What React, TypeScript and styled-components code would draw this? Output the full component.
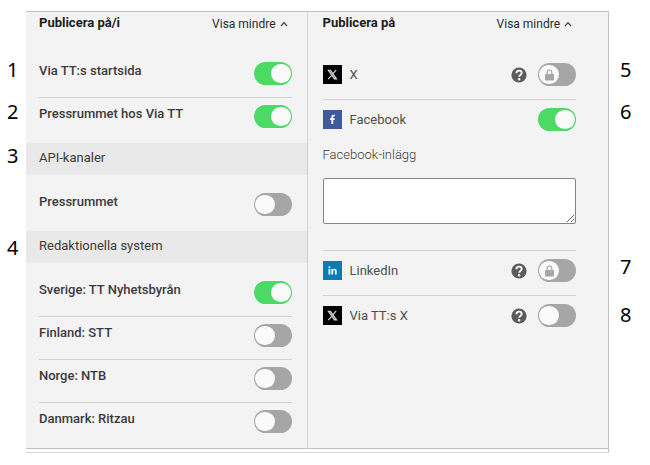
import React, { useState } from "react";
import styled, { createGlobalStyle, css } from "styled-components";

const GlobalStyle = createGlobalStyle`
  * { box-sizing: border-box; }
  body {
    margin: 0;
    background: #fff;
    color: #3b3b3b;
    font: 400 13px/16px Roboto, "Liberation Sans", sans-serif;
  }
`;

const Page = styled.main`
  display: grid;
  grid-template-columns: 26px minmax(0, 1fr) 41px;
  padding: 11px 0 12px;
`;

const Markers = styled.ol<{ $rows: string; $indent: number }>`
  display: grid;
  grid-template-rows: ${(p) => p.$rows};
  align-content: start;
  margin: 0;
  padding: 47px 0 0 ${(p) => p.$indent}px;
  list-style: none;
  font: 400 20px/24px "Noto Sans", "Open Sans", sans-serif;
  color: #000;
`;

const Panel = styled.div`
  display: grid;
  grid-template-columns: 282fr 301fr;
  padding-bottom: 3px;
  border: solid #c2c2c2;
  border-width: 1px 1px 1px 0;
  border-bottom-color: #d6d6d6;
`;

const Column = styled.section<{ $divided?: boolean }>`
  --start: ${(p) => (p.$divided ? 13 : 15)}px;
  --end: ${(p) => (p.$divided ? 15 : 32)}px;
  background: #f3f3f3;
  border-bottom: 1px solid #c2c2c2;
  ${(p) => p.$divided && css`border-right: 1px solid #d0d0d0;`}
`;

const Header = styled.header`
  display: flex;
  justify-content: space-between;
  align-items: center;
  height: 32px;
  padding: 0 calc(var(--end) + 4px) 10px var(--start);
`;

const Title = styled.h2`
  margin: 0;
  font-size: 13px;
  font-weight: 700;
  color: #1c1c1c;
`;

const Collapse = styled.button`
  display: flex;
  align-items: center;
  gap: 4px;
  padding: 2px 0 0;
  border: 0;
  background: none;
  color: #2a2a2a;
  font: 400 12px/16px Roboto, "Liberation Sans", sans-serif;
  cursor: pointer;
`;

const SectionTitle = styled.h3`
  margin: 0;
  padding: 7px var(--start) 9px;
  background: #e9e9e9;
  font-size: 13px;
  font-weight: 400;
`;

const Group = styled.div`
  padding: 11px var(--end) 3px var(--start);
`;

const Row = styled.div<{ $divided?: boolean }>`
  display: flex;
  align-items: flex-start;
  justify-content: space-between;
  padding: 7px 0 12px;
  ${(p) => p.$divided && css`border-top: 1px solid #d2d2d2;`}
`;

const RowLabel = styled.label`
  font-weight: 500;
  line-height: 18px;
`;

const ChannelRow = styled(Row)`
  align-items: center;
  gap: 11px;
  padding: 8px 0 13px;
`;

const ChannelLabel = styled.label`
  display: flex;
  flex: 1;
  align-items: center;
  gap: 8px;
  color: #4e4e4e;
`;

const HelpButton = styled.button`
  display: flex;
  padding: 0;
  border: 0;
  background: none;
  cursor: pointer;
`;

const SwitchBox = styled.span`
  position: relative;
  display: flex;
`;

const SwitchInput = styled.input`
  appearance: none;
  display: flex;
  align-items: center;
  width: 38px;
  height: 23px;
  margin: 0;
  padding: 0 1px;
  border-radius: 12px;
  background: #a6a6a6;
  cursor: pointer;

  &::before {
    content: "";
    width: 20px;
    height: 19px;
    border-radius: 10px;
    background: #fafafa;
  }
  &:checked {
    justify-content: flex-end;
    background: #4cd964;
  }
`;

const LockMark = styled.svg`
  position: absolute;
  left: 7px;
  top: 6px;
  pointer-events: none;
`;

const Field = styled.div`
  display: flex;
  flex-direction: column;
  gap: 15px;
  padding: 3px 0 26px;
`;

const FieldLabel = styled.label`
  font-weight: 300;
`;

const TextArea = styled.textarea`
  display: block;
  width: 100%;
  height: 46px;
  padding: 4px;
  border: 1px solid #858585;
  border-radius: 2px;
  background: #fff;
  font: inherit;
  resize: both;
`;

function Caret() {
  return (
    <svg width="8" height="6" viewBox="0 0 8 6" aria-hidden="true">
      <path d="M1 5 4 1.6 7 5" fill="none" stroke="#444" strokeWidth="1.2" />
    </svg>
  );
}

function XLogo() {
  return (
    <svg width="19" height="19" viewBox="0 0 19 19" aria-hidden="true">
      <rect width="19" height="19" fill="#000" />
      <path d="M5.3 5.3h2.2l6.1 8.6h-2.2z" fill="#777" stroke="#d8d8d8" strokeWidth="1.1" />
      <path d="M13.2 4.9 10.1 8.6M8.7 10.3l-3.5 3.9" stroke="#d8d8d8" strokeWidth="1.1" />
    </svg>
  );
}

function FacebookLogo() {
  return (
    <svg width="19" height="19" viewBox="0 0 19 19" aria-hidden="true">
      <rect width="19" height="19" fill="#3f5b9b" />
      <path d="M8.4 14V9.9H7V8.2h1.4V7c0-1.5.9-2.3 2.2-2.3l1.3.1v1.5h-.8c-.7 0-.9.3-.9.8v1.1h1.6l-.3 1.7h-1.3V14z" fill="#fff" />
    </svg>
  );
}

function LinkedInLogo() {
  return (
    <svg width="19" height="19" viewBox="0 0 19 19" aria-hidden="true">
      <rect width="19" height="19" fill="#0a7cb5" />
      <circle cx="6.4" cy="6.3" r="1" fill="#fff" />
      <path d="M5.5 8h1.8v5.4H5.5zM8.4 8h1.7v.7c.3-.5.9-.9 1.6-.9 1.5 0 2 .9 2 2.4v3.2H12v-2.9c0-.8-.2-1.2-.8-1.2-.7 0-1 .5-1 1.2v2.9H8.4z" fill="#fff" />
    </svg>
  );
}

function HelpIcon() {
  return (
    <svg width="16" height="16" viewBox="0 0 16 16" aria-hidden="true">
      <circle cx="8" cy="8" r="7.6" fill="#5b5b5b" />
      <path d="M5.4 6.3C5.4 4.5 6.5 3.6 8 3.6s2.7.9 2.7 2.3c0 1.9-2.5 2-2.5 3.9" fill="none" stroke="#fff" strokeWidth="1.8" />
      <circle cx="8.1" cy="12.2" r="1.2" fill="#fff" />
    </svg>
  );
}

function Switch({ id, on, locked }: { id: string; on?: boolean; locked?: boolean }) {
  const [checked, setChecked] = useState(Boolean(on));
  return (
    <SwitchBox>
      <SwitchInput
        id={id}
        type="checkbox"
        role="switch"
        checked={checked}
        disabled={locked}
        onChange={(e) => setChecked(e.target.checked)}
      />
      {locked && (
        <LockMark width="9" height="12" viewBox="0 0 9 12" aria-hidden="true">
          <path d="M2.2 5.5V3.3a2.3 2.3 0 0 1 4.6 0v2.2" fill="none" stroke="#a6a6a6" strokeWidth="1.2" />
          <rect y="5" width="9" height="6.4" rx=".6" fill="#a6a6a6" />
        </LockMark>
      )}
    </SwitchBox>
  );
}

function ColumnHeader({ title }: { title: string }) {
  return (
    <Header>
      <Title>{title}</Title>
      <Collapse type="button" aria-expanded="true">
        Visa mindre
        <Caret />
      </Collapse>
    </Header>
  );
}

interface Outlet {
  id: string;
  name: string;
  on?: boolean;
}

function Outlets({ items }: { items: Outlet[] }) {
  return (
    <Group>
      {items.map((item, i) => (
        <Row key={item.id} $divided={i > 0}>
          <RowLabel htmlFor={item.id}>{item.name}</RowLabel>
          <Switch id={item.id} on={item.on} />
        </Row>
      ))}
    </Group>
  );
}

interface ChannelProps extends Outlet {
  logo: React.ReactNode;
  help?: boolean;
  locked?: boolean;
  divided?: boolean;
}

function Channel({ id, name, logo, on, help, locked, divided }: ChannelProps) {
  return (
    <ChannelRow $divided={divided}>
      <ChannelLabel htmlFor={id}>
        {logo}
        {name}
      </ChannelLabel>
      {help && (
        <HelpButton type="button" aria-label={`Hjälp: ${name}`}>
          <HelpIcon />
        </HelpButton>
      )}
      <Switch id={id} on={on} locked={locked} />
    </ChannelRow>
  );
}

export default function App() {
  return (
    <>
      <GlobalStyle />
      <Page>
        <Markers $rows="42px 44px 92px 24px" $indent={7}>
          <li>1</li>
          <li>2</li>
          <li>3</li>
          <li>4</li>
        </Markers>
        <Panel>
          <Column $divided>
            <ColumnHeader title="Publicera på/i" />
            <Outlets
              items={[
                { id: "startsida", name: "Via TT:s startsida", on: true },
                { id: "pressrum-via", name: "Pressrummet hos Via TT", on: true },
              ]}
            />
            <SectionTitle>API-kanaler</SectionTitle>
            <Outlets items={[{ id: "pressrum", name: "Pressrummet" }]} />
            <SectionTitle>Redaktionella system</SectionTitle>
            <Outlets
              items={[
                { id: "sverige", name: "Sverige: TT Nyhetsbyrån", on: true },
                { id: "finland", name: "Finland: STT" },
                { id: "norge", name: "Norge: NTB" },
                { id: "danmark", name: "Danmark: Ritzau" },
              ]}
            />
          </Column>
          <Column>
            <ColumnHeader title="Publicera på" />
            <Group>
              <Channel id="x" name="X" logo={<XLogo />} help locked />
              <Channel id="facebook" name="Facebook" logo={<FacebookLogo />} on divided />
              <Field>
                <FieldLabel htmlFor="fb-post">Facebook-inlägg</FieldLabel>
                <TextArea id="fb-post" />
              </Field>
              <Channel id="linkedin" name="LinkedIn" logo={<LinkedInLogo />} help locked divided />
              <Channel id="via-x" name="Via TT:s X" logo={<XLogo />} help divided />
            </Group>
          </Column>
        </Panel>
        <Markers $rows="42px 155px 48px 24px" $indent={11}>
          <li>5</li>
          <li>6</li>
          <li>7</li>
          <li>8</li>
        </Markers>
      </Page>
    </>
  );
}
